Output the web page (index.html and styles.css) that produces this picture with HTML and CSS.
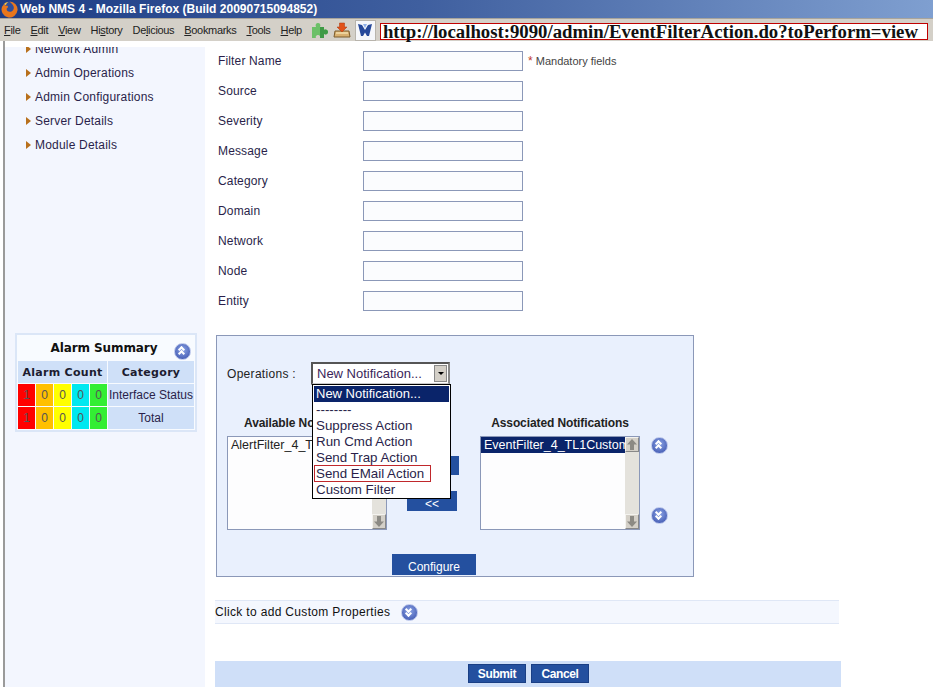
FILE: index.html
```html
<!DOCTYPE html>
<html lang="en">
<head>
    <meta charset="UTF-8">
    <title>Web NMS 4 - Mozilla Firefox (Build 20090715094852)</title>
    <link rel="stylesheet" href="styles.css">
</head>
<body>
    <!-- Title bar -->
    <div class="titlebar">
        <svg class="ff-icon" width="17" height="17" viewBox="0 0 16 16">
            <circle cx="8" cy="8" r="7.500" fill="#2f4f9c"/>
            <path d="M8 .5A7.500 7.500 0 1 1 1 5.500C2 4 2.500 3.500 3 2.500 3.200 4 4 4 4.500 4.500 6 4 7 5 6.500 6 5 6.500 5 8 6 9.500 8 11 11.500 10 12 7 12.500 5 11 3 8 .5Z" fill="#e8761c"/>
            <path d="M3 3C3.500 2 5 1 7 1 5.500 2 5 3 4.500 4Z" fill="#f7c03c"/>
        </svg>
        <span>Web NMS 4 - Mozilla Firefox (Build 20090715094852)</span>
    </div>

    <!-- Menu bar -->
    <div class="menubar">
        <a class="menu"><u>F</u>ile</a>
        <a class="menu"><u>E</u>dit</a>
        <a class="menu"><u>V</u>iew</a>
        <a class="menu">Hi<u>s</u>tory</a>
        <a class="menu">De<u>l</u>icious</a>
        <a class="menu"><u>B</u>ookmarks</a>
        <a class="menu"><u>T</u>ools</a>
        <a class="menu"><u>H</u>elp</a>
        <svg class="tool-icon puzzle" width="18" height="18" viewBox="0 0 18 18">
            <path d="M1 6H5C4 4 5 2 7 2S10 4 9 6H13V9C15 8 17 9 17 11S15 14 13 13V17H9C10 15 8 14 7 14S4 15 5 17H1Z" fill="#6cc068"/>
            <path d="M9 6H13V9C15 8 17 9 17 11S15 14 13 13V17H9Z" fill="#3f9a45"/>
        </svg>
        <svg class="tool-icon" width="18" height="18" viewBox="0 0 18 18">
            <path d="M2 10H16L17 16H1Z" fill="#d8b070" stroke="#7a5a2a"/>
            <path d="M3 12H15" stroke="#fff3c8"/>
            <path d="M6.500 2H11.500V6H14L9 11 4 6H6.500Z" fill="#e2521a" stroke="#a8340c" stroke-width=".5"/>
        </svg>
        <div class="logo-box">
            <svg width="16" height="14" viewBox="0 0 16 14">
                <path d="M1 1 5 2 8 7 11 2 15 1 12 13H10L8 9.500 6 13H4Z" fill="#27499a"/>
                <path d="M6 1H10L8 5Z" fill="#8fb0e8"/>
            </svg>
        </div>
        <div class="url">http://localhost:9090/admin/EventFilterAction.do?toPerform=view</div>
    </div>

    <div class="main">
        <!-- Left navigation -->
        <div class="sidebar">
            <div class="sidebar-inner">
                <ul class="nav">
                    <li>Network Admin</li>
                    <li>Admin Operations</li>
                    <li>Admin Configurations</li>
                    <li>Server Details</li>
                    <li>Module Details</li>
                </ul>

                <div class="alarm-box">
                    <div class="alarm-title">
                        <span>Alarm Summary</span>
                        <span class="round-btn up small-pos"></span>
                    </div>
                    <table class="alarm-table">
                        <colgroup>
                            <col class="sev-col">
                            <col class="sev-col">
                            <col class="sev-col">
                            <col class="sev-col">
                            <col class="sev-col">
                            <col class="cat-col">
                        </colgroup>
                        <tr>
                            <th colspan="5">Alarm Count</th>
                            <th>Category</th>
                        </tr>
                        <tr>
                            <td class="sev red">1</td>
                            <td class="sev orange">0</td>
                            <td class="sev yellow">0</td>
                            <td class="sev cyan">0</td>
                            <td class="sev green">0</td>
                            <td class="cat">Interface Status</td>
                        </tr>
                        <tr>
                            <td class="sev red">1</td>
                            <td class="sev orange">0</td>
                            <td class="sev yellow">0</td>
                            <td class="sev cyan">0</td>
                            <td class="sev green">0</td>
                            <td class="cat">Total</td>
                        </tr>
                    </table>
                </div>
            </div>
        </div>

        <!-- Filter form -->
        <div class="content">
            <div class="form-row"><label>Filter Name</label><input type="text"><span class="mandatory"><b>*</b> Mandatory fields</span></div>
            <div class="form-row"><label>Source</label><input type="text"></div>
            <div class="form-row"><label>Severity</label><input type="text"></div>
            <div class="form-row"><label>Message</label><input type="text"></div>
            <div class="form-row"><label>Category</label><input type="text"></div>
            <div class="form-row"><label>Domain</label><input type="text"></div>
            <div class="form-row"><label>Network</label><input type="text"></div>
            <div class="form-row"><label>Node</label><input type="text"></div>
            <div class="form-row"><label>Entity</label><input type="text"></div>

            <div class="ops-panel">
                <div class="ops-row">
                    <span class="ops-label">Operations :</span>
                    <div class="select-box">
                        <span class="select-text">New Notification...</span>
                        <span class="select-arrow"></span>
                    </div>
                </div>

                <div class="lists">
                    <div class="list-col">
                        <div class="list-title">Available Notifications</div>
                        <div class="listbox">
                            <div class="list-item">AlertFilter_4_TL1Custom</div>
                            <div class="scrollbar">
                                <span class="scroll-btn scroll-up"></span>
                                <span class="scroll-btn scroll-down"></span>
                            </div>
                        </div>
                    </div>
                    <div class="move-btns">
                        <a class="btn move first">&gt;&gt;</a>
                        <a class="btn move">&lt;&lt;</a>
                    </div>
                    <div class="list-col">
                        <div class="list-title">Associated Notifications</div>
                        <div class="listbox">
                            <div class="list-item selected">EventFilter_4_TL1Custom</div>
                            <div class="scrollbar">
                                <span class="scroll-btn scroll-up"></span>
                                <span class="scroll-btn scroll-down"></span>
                            </div>
                        </div>
                    </div>
                    <div class="order-btns">
                        <span class="round-btn up"></span>
                        <span class="round-btn down"></span>
                    </div>
                </div>

                <div class="configure-row"><a class="btn configure">Configure</a></div>

                <!-- Open select list -->
                <ul class="dropdown">
                    <li class="selected">New Notification...</li>
                    <li>--------</li>
                    <li>Suppress Action</li>
                    <li>Run Cmd Action</li>
                    <li>Send Trap Action</li>
                    <li class="marked">Send EMail Action</li>
                    <li>Custom Filter</li>
                </ul>
            </div>

            <div class="custom-props">
                <span class="custom-text">Click to add Custom Properties</span>
                <span class="round-btn down"></span>
            </div>

            <div class="action-bar">
                <a class="btn action">Submit</a>
                <a class="btn action">Cancel</a>
            </div>
        </div>
    </div>
</body>
</html>
```

FILE: styles.css
```css
/* Basic Reset */
html, body {
    margin: 0;
    padding: 0;
    height: 687px;
    overflow: hidden;
    background: #fff;
    font-family: "Liberation Sans", Arial, sans-serif;
    font-size: 12px;
    color: #2a1f4a;
}

/* Title bar */
.titlebar {
    height: 18px;
    display: flex;
    align-items: center;
    gap: 2px;
    padding-left: 1px;
    background: linear-gradient(to right, #1d3c85, #3f5f9f 45%, #7f9fd0);
    color: #fff;
    font-size: 12px;
    font-weight: bold;
}

/* Menu bar */
.menubar {
    height: 23px;
    display: flex;
    align-items: center;
    padding-left: 4px;
    background: #d4d0c8;
    color: #222;
    border-top: 1px solid #a8a49c;
    box-sizing: border-box;
    font-size: 11px;
}

.menu {
    margin-right: 10px;
    letter-spacing: -0.32px;
}

.tool-icon {
    margin-right: 4px;
}

.puzzle {
    margin-left: -1px;
}

.logo-box {
    width: 21px;
    height: 21px;
    display: flex;
    align-items: center;
    justify-content: center;
    background: #f6f7fa;
    border: 1px solid #b8b4ac;
    box-sizing: border-box;
}

.url {
    width: 548px;
    height: 17px;
    margin: 3px 0 0 4px;
    padding-left: 2px;
    box-sizing: border-box;
    background: #fff;
    border: 1px solid #c00000;
    color: #111;
    font-family: "Liberation Serif", serif;
    font-size: 18.75px;
    font-weight: bold;
    line-height: 15px;
    white-space: nowrap;
}

/* Page body */
.main {
    display: flex;
    height: 646px;
}

/* Left navigation */
.sidebar {
    width: 202px;
    flex: none;
    box-sizing: border-box;
    margin-left: 3px;
    padding-top: 6px;
    border-left: 2px solid #9a9a9a;
}

.sidebar-inner {
    height: 100%;
    background: #f3f6fe;
    overflow: hidden;
}

.nav {
    list-style: none;
    margin: -10px 0 0;
    padding: 0 0 0 17px;
}

.nav li {
    height: 24px;
    line-height: 24px;
    padding-left: 13px;
    position: relative;
    letter-spacing: 0.2px;
}

.nav li::before {
    content: "";
    position: absolute;
    left: 4px;
    top: 8px;
    border-left: 5px solid #b8701c;
    border-top: 4px solid transparent;
    border-bottom: 4px solid transparent;
}

/* Alarm summary */
.alarm-box {
    width: 182px;
    margin: 176px 0 0 10px;
    border: 2px solid #dbe6f7;
    background: #f8fbff;
    box-sizing: border-box;
}

.alarm-title {
    height: 25px;
    position: relative;
    display: flex;
    align-items: center;
    justify-content: center;
    padding-right: 4px;
    color: #111;
    font-family: "DejaVu Sans", sans-serif;
    font-size: 12px;
    font-weight: bold;
    letter-spacing: -0.1px;
}

.round-btn.small-pos {
    position: absolute;
    right: 4px;
    top: 8px;
}

.alarm-table {
    width: 178px;
    border-collapse: separate;
    border-spacing: 1px;
    table-layout: fixed;
}

.sev-col {
    width: 17px;
}

.cat-col {
    width: 86px;
}

.alarm-table th {
    height: 22px;
    padding: 0;
    background: #cfe0f8;
    color: #1c1c30;
    font-family: "DejaVu Sans", sans-serif;
    font-size: 11px;
    letter-spacing: 0.3px;
}

.alarm-table td {
    height: 22px;
    padding: 0;
    text-align: center;
}

.alarm-table .sev {
    color: #555;
}

.alarm-table .cat {
    background: #cfe0f8;
    white-space: nowrap;
}

.red { background: #ff0000; }
.orange { background: #ffc000; }
.yellow { background: #ffff00; }
.cyan { background: #00e8f0; }
.green { background: #33ee33; }

/* Filter form */
.content {
    flex: 1;
    padding: 5px 0 0 10px;
    position: relative;
}

.form-row {
    height: 30px;
    display: flex;
    align-items: center;
}

.form-row label {
    width: 148px;
    padding-left: 3px;
    box-sizing: border-box;
    letter-spacing: 0.15px;
}

.form-row input {
    width: 160px;
    height: 20px;
    margin: 0;
    padding: 0;
    box-sizing: border-box;
    background: #fbfcfe;
    border: 1px solid #8b98b8;
}

.mandatory {
    margin-left: 5px;
    font-size: 11px;
    color: #444;
}

.mandatory b {
    color: #c0392b;
    font-weight: normal;
    font-size: 12px;
}

/* Operations panel */
.ops-panel {
    position: relative;
    width: 478px;
    height: 242px;
    margin: 19px 0 0 1px;
    box-sizing: border-box;
    background: #e9f0fd;
    border: 1px solid #8b98b8;
    color: #222;
}

.ops-row {
    display: flex;
    align-items: center;
    height: 23px;
    margin-top: 26px;
    padding-left: 10px;
}

.ops-label {
    width: 84px;
    letter-spacing: 0.3px;
}

.select-box {
    width: 139px;
    height: 23px;
    box-sizing: border-box;
    display: flex;
    align-items: center;
    justify-content: space-between;
    padding: 0 1px 0 4px;
    background: #fff;
    border: 2px solid #555;
    border-right-color: #888;
    border-bottom-color: #ccc;
    font-size: 13px;
    color: #3a1f5a;
}

.select-arrow {
    width: 13px;
    height: 17px;
    position: relative;
    background: #d4d0c8;
    border: 1px solid #888;
    box-sizing: border-box;
}

.select-arrow::after {
    content: "";
    position: absolute;
    left: 3px;
    top: 6px;
    border-top: 3px solid #000;
    border-left: 3px solid transparent;
    border-right: 3px solid transparent;
}

.lists {
    display: flex;
    margin: 23px 0 0 10px;
}

.list-col {
    width: 160px;
}

.list-title {
    height: 28px;
    padding-top: 7px;
    box-sizing: border-box;
    text-align: center;
    font-weight: bold;
    font-size: 12px;
    line-height: 16px;
    letter-spacing: -0.1px;
}

.listbox {
    position: relative;
    height: 94px;
    box-sizing: border-box;
    background: #fdfdfe;
    border: 1px solid #8b98b8;
    overflow: hidden;
    font-size: 12.5px;
}

.list-item {
    height: 16px;
    line-height: 16px;
    padding-left: 3px;
    white-space: nowrap;
}

.list-item.selected {
    background: #0a246a;
    color: #fff;
}

.scrollbar {
    position: absolute;
    top: 0;
    right: 0;
    bottom: 0;
    width: 14px;
    display: flex;
    flex-direction: column;
    justify-content: space-between;
    background: #e4e2dc;
}

.scroll-btn {
    height: 15px;
    position: relative;
    background: #d4d0c8;
    border: 1px solid;
    border-color: #f4f3ef #888 #888 #f4f3ef;
    box-sizing: border-box;
}

.scroll-up::after,
.scroll-down::after {
    content: "";
    position: absolute;
    left: 1px;
    width: 10px;
    height: 11px;
    background: #8c8a84;
}

.scroll-up::after {
    top: 1px;
    clip-path: polygon(50% 0, 100% 50%, 70% 50%, 70% 100%, 30% 100%, 30% 50%, 0 50%);
}

.scroll-down::after {
    top: 1px;
    clip-path: polygon(30% 0, 70% 0, 70% 50%, 100% 50%, 50% 100%, 0 50%, 30% 50%);
}

.move-btns {
    width: 93px;
    display: flex;
    flex-direction: column;
    gap: 16px;
    padding: 48px 0 0 20px;
    box-sizing: border-box;
}

.btn {
    display: flex;
    align-items: center;
    justify-content: center;
    box-sizing: border-box;
    background: #24509f;
    color: #fff;
}

.btn.move {
    width: 50px;
    height: 20px;
    padding-top: 5px;
}

.btn.move.first {
    width: 52px;
    height: 19px;
}

.order-btns {
    margin-left: 11px;
    height: 116px;
    padding-top: 29px;
    box-sizing: border-box;
    display: flex;
    flex-direction: column;
    justify-content: space-between;
}

/* Round up and down arrows */
.round-btn {
    display: inline-block;
    width: 17px;
    height: 17px;
    flex: none;
    position: relative;
    border-radius: 50%;
    background: radial-gradient(circle at 50% 40%, #8ea6e6, #4a62b8 75%);
    border: 1px solid #b8c4ea;
    box-sizing: border-box;
}

.round-btn::before,
.round-btn::after {
    content: "";
    position: absolute;
    left: 4px;
    width: 3px;
    height: 3px;
    border-left: 2px solid #fff;
    border-top: 2px solid #fff;
}

.round-btn.up::before { top: 3px; transform: rotate(45deg); }
.round-btn.up::after { top: 7px; transform: rotate(45deg); }
.round-btn.down::before { top: 2px; transform: rotate(225deg); }
.round-btn.down::after { top: 6px; transform: rotate(225deg); }

.configure-row {
    display: flex;
    padding-left: 175px;
    margin-top: 24px;
}

.btn.configure {
    width: 84px;
    height: 21px;
    padding-top: 4px;
}

/* Open select list */
.dropdown {
    position: absolute;
    left: 95px;
    top: 48px;
    width: 139px;
    height: 115px;
    margin: 0;
    padding: 1px;
    list-style: none;
    box-sizing: border-box;
    background: #fff;
    border: 1px solid #000;
    color: #2a1f4a;
    font-size: 13.33px;
}

.dropdown li {
    height: 16px;
    line-height: 16px;
    padding-left: 2px;
    position: relative;
    white-space: nowrap;
}

.dropdown li.selected {
    background: #0a246a;
    color: #fff;
    font-size: 13px;
}

.dropdown li.marked::after {
    content: "";
    position: absolute;
    left: 0;
    top: -1px;
    width: 117px;
    height: 17px;
    border: 1px solid #c0282c;
    box-sizing: border-box;
}

/* Custom properties row */
.custom-props {
    width: 624px;
    height: 24px;
    margin-top: 23px;
    display: flex;
    align-items: center;
    gap: 11px;
    box-sizing: border-box;
    background: #f4f7fe;
    border-top: 1px solid #dfe7f6;
    border-bottom: 1px solid #dfe7f6;
    color: #111;
}

.custom-text {
    letter-spacing: 0.33px;
}

/* Submit bar */
.action-bar {
    width: 626px;
    height: 26px;
    margin-top: 37px;
    display: flex;
    justify-content: center;
    align-items: flex-start;
    gap: 5px;
    padding: 3px 0 0 1px;
    box-sizing: border-box;
    background: #cfdff8;
}

.btn.action {
    width: 58px;
    height: 19px;
    font-weight: bold;
    letter-spacing: -0.4px;
    border: 1px solid #1a3f85;
}
```
